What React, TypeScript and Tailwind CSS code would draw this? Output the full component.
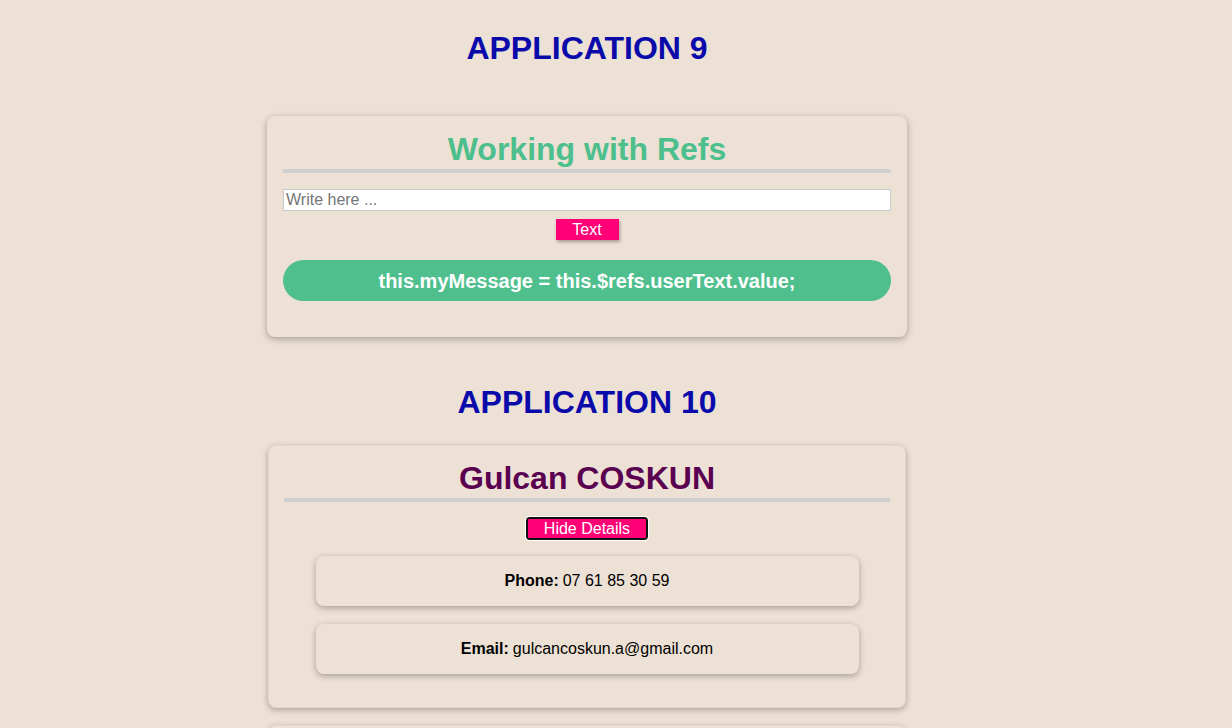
import { useRef, useState } from "react";

function Heading({ children, className }: { children: React.ReactNode; className?: string }) {
    return (
        <h1 className={`text-[32px] leading-[37px] font-bold text-center text-[#0a0aab] ${className ?? ""}`}>
            {children}
        </h1>
    );
}

function InfoRow({ label, value }: { label: string; value: string }) {
    return (
        <div className="w-[543px] mx-auto h-[50px] flex items-center justify-center rounded-lg bg-[#ede0d4] shadow-[0_2px_6px_rgba(0,0,0,0.3)] text-base text-black">
            <b className="mr-1">{label}</b>
            {value}
        </div>
    );
}

export default function App() {
    const userText = useRef<HTMLInputElement>(null);
    const [myMessage, setMyMessage] = useState("this.myMessage = this.$refs.userText.value;");
    const [showDetails, setShowDetails] = useState(true);

    return (
        <div className="min-h-[728px] bg-[#ede0d4] font-['Liberation_Sans',Arial,sans-serif] overflow-hidden pr-[58px]">
            <div className="w-[640px] mx-auto pt-[30px]">
                <Heading>APPLICATION 9</Heading>

                <section className="mt-[49px] rounded-lg bg-[#ede0d4] shadow-[0_2px_7px_rgba(0,0,0,0.3)] px-4 pt-[15px] pb-[36px]">
                    <h2 className="text-[32px] leading-[37px] font-bold text-center text-[#4dbf8c] pb-px border-b-4 border-[#cfcfcf]">
                        Working with Refs
                    </h2>
                    <input
                        ref={userText}
                        type="text"
                        placeholder="Write here ..."
                        className="block w-full mt-4 h-[22px] px-[2px] text-base bg-white border border-[#c8c8c8] placeholder:text-[#757575] outline-none"
                    />
                    <div className="flex justify-center mt-2">
                        <button
                            onClick={() => setMyMessage(userText.current?.value || myMessage)}
                            className="w-[63px] h-[21px] bg-[#ff0077] text-white text-base leading-[21px] shadow-[1px_2px_3px_rgba(0,0,0,0.3)]"
                        >
                            Text
                        </button>
                    </div>
                    <div className="mt-5 h-[41px] rounded-full bg-[#4fbf8d] flex items-center justify-center text-white text-[20px] font-bold">
                        {myMessage}
                    </div>
                </section>

                <Heading className="mt-[47px]">APPLICATION 10</Heading>

                <section className="mt-[24px] w-[638px] mx-auto rounded-lg bg-[#ede0d4] border border-[#e4d8cc] shadow-[0_2px_6px_rgba(0,0,0,0.28)] px-[15px] pt-[14px] pb-[33px]">
                    <h2 className="text-[32px] leading-[37px] font-bold text-center text-[#5a0050] pb-px border-b-4 border-[#cfcfcf]">
                        Gulcan COSKUN
                    </h2>
                    <div className="flex justify-center mt-[15px]">
                        <button
                            onClick={() => setShowDetails(!showDetails)}
                            className="w-[122px] h-[23px] bg-[#ff0077] text-white text-base leading-[19px] border-2 border-[#111] rounded-[3px] outline outline-1 outline-white"
                        >
                            {showDetails ? "Hide Details" : "Show Details"}
                        </button>
                    </div>
                    {showDetails && (
                        <div className="mt-4 flex flex-col gap-[18px]">
                            <InfoRow label="Phone:" value="07 61 85 30 59" />
                            <InfoRow label="Email:" value="gulcancoskun.a@gmail.com" />
                        </div>
                    )}
                </section>

                <section className="mt-[17px] w-[638px] h-[120px] mx-auto rounded-lg bg-[#ede0d4] border border-[#e4d8cc] shadow-[0_2px_6px_rgba(0,0,0,0.28)]" />
            </div>
        </div>
    );
}
